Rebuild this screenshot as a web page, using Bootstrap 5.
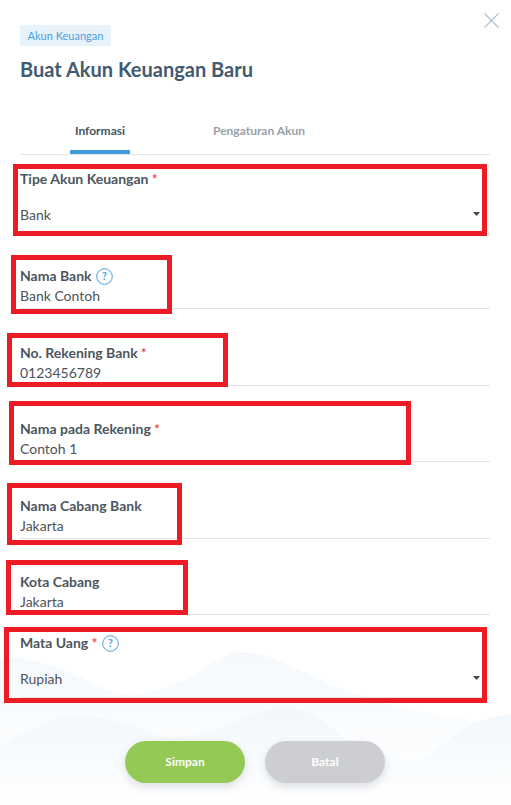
<!doctype html>
<html lang="id">
<head>
<meta charset="utf-8">
<title>Buat Akun Keuangan Baru</title>
<link href="https://cdn.jsdelivr.net/npm/bootstrap@5.3.0/dist/css/bootstrap.min.css" rel="stylesheet">
<style>
html,body{height:100%;}
body{font-family:"Lato","Liberation Sans",sans-serif;background:#fff;overflow:hidden;color:#47525d;}
.sheet{position:relative;width:511px;height:805px;padding:25px 21px 0 20px;overflow:hidden;}
.waves{position:absolute;left:0;bottom:0;width:511px;height:155px;}
.sheet-body{position:relative;}
.closer{position:absolute;top:13px;left:484px;width:15px;height:15px;padding:0;border:0;background:none;line-height:0;}
.tagline{display:block;width:91px;text-align:center;background:#e8f2fa;color:#4a9fdf;font-size:11px;line-height:21px;height:21px;border-radius:2px;}
.page-title{font-size:20px;font-weight:700;color:#415a70;line-height:24px;margin:11px 0 0;}
.tabbar{margin-top:32px;height:42px;border-bottom:1px solid #e3e5e8;display:flex;}
.tabbar .nav-link{height:41px;padding:0;font-size:12px;font-weight:700;line-height:36px;text-align:center;color:#9a9fa8;background:none;border:0;}
.tabbar .nav-link.active{color:#47525d;border-bottom:4px solid #419bd8;margin-left:50px;width:60px;}
.tab-two{margin-left:83px;}
.entry{position:relative;border-bottom:1px solid #e0e2e5;height:76.500px;padding-top:33.500px;}
.entry-sel{height:79px;padding-top:14px;}
.entry-second{height:75px;padding-top:32px;}
.entry label{display:block;font-size:14px;font-weight:700;line-height:20px;margin:0;color:#4c5660;}
.entry label .req{color:#f04a4a;font-weight:700;font-size:13px;}
.entry .form-control,.entry .form-select{font-family:inherit;font-size:14px;line-height:20px;color:#4d5359;border:0;border-radius:0;background-color:transparent;padding:0;height:20px;box-shadow:none;}
.entry-sel .form-select{margin-top:16px;background-image:url("data:image/svg+xml,%3Csvg xmlns='http://www.w3.org/2000/svg' width='7' height='4'%3E%3Cpath d='M0 0h7L3.500 4z' fill='%23444'/%3E%3C/svg%3E");background-size:7px 4px;background-position:right 0 top 7px;background-repeat:no-repeat;width:460px;}
.entry-last{height:83px;padding-top:18px;}
.hint{display:inline-block;width:17px;height:17px;vertical-align:-4px;margin-left:1px;}
.flag{position:absolute;z-index:2;border:5px solid #ed1c24;pointer-events:none;}
.flag1{left:-7px;top:9px;width:474px;height:72px;}
.flag2{left:-9px;top:21px;width:161px;height:59px;}
.flag3{left:-13px;top:24px;width:221px;height:54px;}
.flag4{left:-11px;top:15.500px;width:402px;height:64px;}
.flag5{left:-13px;top:21px;width:175px;height:62px;}
.flag6{left:-14px;top:21.500px;width:182px;height:55px;}
.flag7{left:-16px;top:12px;width:483px;height:76px;}
.actions{position:absolute;left:125px;top:741px;display:flex;gap:20px;}
.actions .btn{width:120px;height:42px;border:0;border-radius:21px;color:#fff;font-size:12px;font-weight:700;padding:0;box-shadow:0 4px 8px rgba(60,70,80,.16);}
.btn-keep{background:#94c955;}
.btn-quit{background:#cdced2;}
</style>
</head>
<body>
<div class="sheet">
  <svg class="waves" viewBox="0 0 511 155" aria-hidden="true">
    <defs>
      <linearGradient id="wfade" x1="0" y1="0" x2="0" y2="1">
        <stop offset="0" stop-color="#f1f7fc"/>
        <stop offset="1" stop-color="#ffffff"/>
      </linearGradient>
    </defs>
    <path d="M0 9C20 4 50 14 80 27C100 38 118 46 133 45C160 42 175 32 187 30C205 20 222 3 240 2C265 2 285 14 300 20C325 32 345 42 367 47C410 62 460 70 511 75V155H0Z" fill="url(#wfade)" opacity=".7"/>
    <path d="M0 97C25 80 55 66 80 66C110 66 140 80 167 87C185 88 200 84 217 80C240 70 265 58 287 58C310 58 330 76 347 90C370 102 395 112 420 110C440 100 450 86 467 77C482 70 495 65 511 65V155H0Z" fill="url(#wfade)"/>
  </svg>
  <button type="button" class="closer" aria-label="Tutup">
    <svg width="15" height="15" viewBox="0 0 15 15"><path d="M.5.500l14 14M14.500.500l-14 14" stroke="#b7c3cc" stroke-width="1.400" fill="none"/></svg>
  </button>
  <div class="sheet-body">
    <span class="tagline">Akun Keuangan</span>
    <h1 class="page-title">Buat Akun Keuangan Baru</h1>
    <nav class="nav tabbar">
      <a class="nav-link active" href="#">Informasi</a>
      <a class="nav-link tab-two" href="#">Pengaturan Akun</a>
    </nav>
    <form>
      <div class="entry entry-sel">
        <span class="flag flag1"></span>
        <label for="f1">Tipe Akun Keuangan <span class="req">*</span></label>
        <select id="f1" class="form-select"><option>Bank</option></select>
      </div>
      <div class="entry entry-second">
        <span class="flag flag2"></span>
        <label for="f2">Nama Bank
          <svg class="hint" viewBox="0 0 17 17"><circle cx="8.500" cy="8.500" r="7.800" fill="none" stroke="#4a9fdf" stroke-width="1"/><text x="8.500" y="12.300" text-anchor="middle" font-size="10.500" font-weight="700" fill="#4a9fdf">?</text></svg>
        </label>
        <input id="f2" class="form-control" value="Bank Contoh">
      </div>
      <div class="entry">
        <span class="flag flag3"></span>
        <label for="f3">No. Rekening Bank <span class="req">*</span></label>
        <input id="f3" class="form-control" value="0123456789">
      </div>
      <div class="entry">
        <span class="flag flag4"></span>
        <label for="f4">Nama pada Rekening <span class="req">*</span></label>
        <input id="f4" class="form-control" value="Contoh 1">
      </div>
      <div class="entry">
        <span class="flag flag5"></span>
        <label for="f5">Nama Cabang Bank</label>
        <input id="f5" class="form-control" value="Jakarta">
      </div>
      <div class="entry">
        <span class="flag flag6"></span>
        <label for="f6">Kota Cabang</label>
        <input id="f6" class="form-control" value="Jakarta">
      </div>
      <div class="entry entry-sel entry-last">
        <span class="flag flag7"></span>
        <label for="f7">Mata Uang <span class="req">*</span>
          <svg class="hint" viewBox="0 0 17 17"><circle cx="8.500" cy="8.500" r="7.800" fill="none" stroke="#4a9fdf" stroke-width="1"/><text x="8.500" y="12.300" text-anchor="middle" font-size="10.500" font-weight="700" fill="#4a9fdf">?</text></svg>
        </label>
        <select id="f7" class="form-select"><option>Rupiah</option></select>
      </div>
    </form>
  </div>
  <div class="actions">
    <button type="button" class="btn btn-keep">Simpan</button>
    <button type="button" class="btn btn-quit">Batal</button>
  </div>
</div>
<script src="https://cdn.jsdelivr.net/npm/bootstrap@5.3.0/dist/js/bootstrap.bundle.min.js"></script>
</body>
</html>
